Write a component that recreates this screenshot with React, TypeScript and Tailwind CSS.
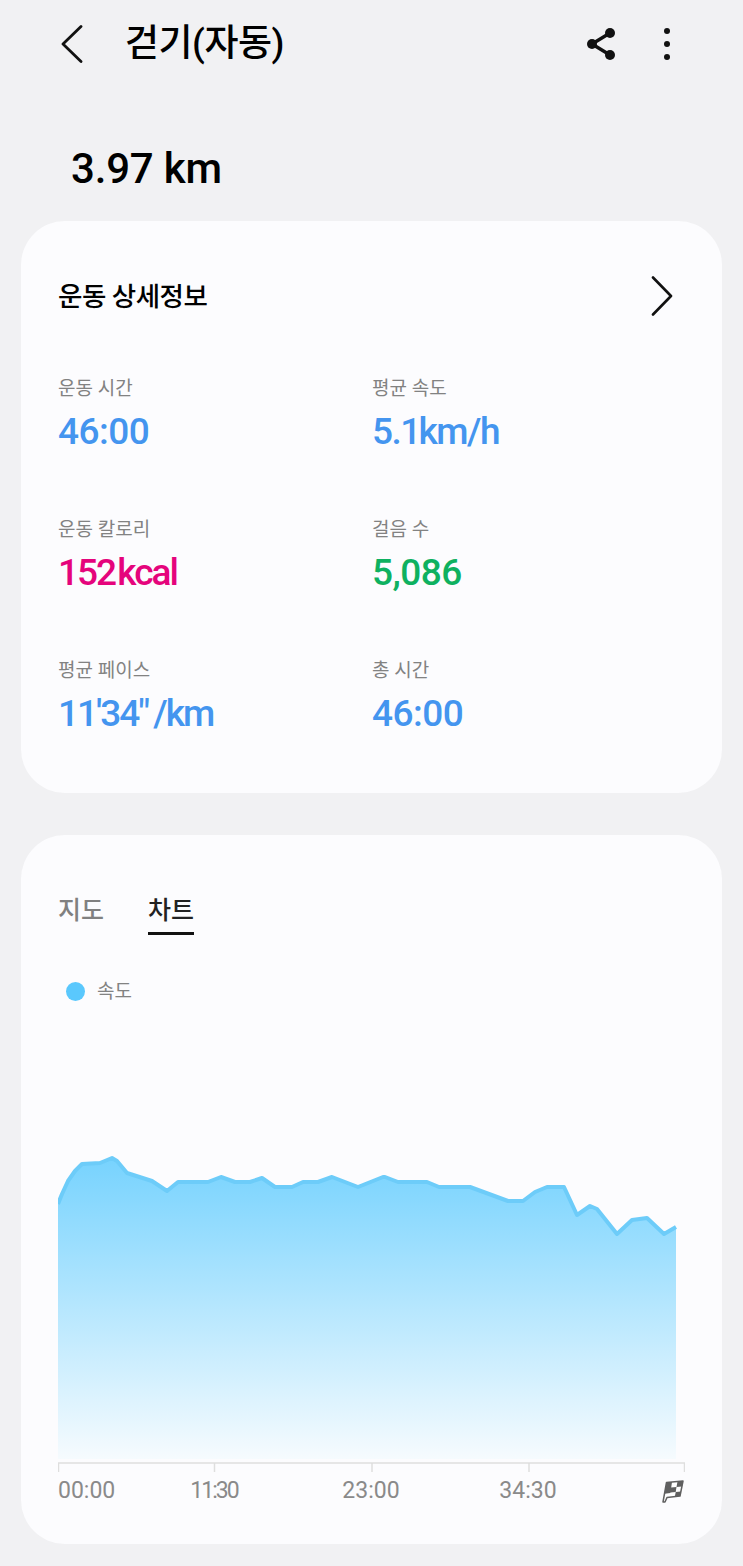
const linePoints = "58,1203 62,1193 68,1180 75,1170 82,1163 100,1162 112,1157 117,1160 127,1172 152,1180 167,1190 178,1181 208,1181 221,1176 235,1181 250,1181 262,1177 275,1186 292,1186 303,1181 318,1181 332,1176 358,1186 383,1176 385,1176 398,1181 427,1181 439,1186 470,1186 508,1200 523,1200 535,1191 547,1186 564,1186 577,1214 590,1205 597,1208 617,1233 632,1219 647,1217 664,1233 676,1226";

const plain = "tracking-[-0.5px]";

const stats = [
  { label: "운동 시간", value: "46:00", color: "text-[#4495ef]", fit: plain },
  { label: "평균 속도", value: "5.1 km/h", color: "text-[#4495ef]", fit: "tracking-[-1.500px] [word-spacing:-9px]" },
  { label: "운동 칼로리", value: "152 kcal", color: "text-[#e5047c]", fit: "tracking-[-2px] [word-spacing:-5px]" },
  { label: "걸음 수", value: "5,086", color: "text-[#0eb160]", fit: plain },
  { label: "평균 페이스", value: "11'34\" /km", color: "text-[#4495ef]", fit: "tracking-[-2px] [word-spacing:-2px]" },
  { label: "총 시간", value: "46:00", color: "text-[#4495ef]", fit: plain },
];

const sans = "font-['Roboto','Noto_Sans_CJK_KR',sans-serif]";

function Chart() {
  return (
    <svg viewBox="58 1140 627 332" className="block h-[332px] w-[627px]">
      <defs>
        <linearGradient id="speed" x1="0" y1="1160" x2="0" y2="1458" gradientUnits="userSpaceOnUse">
          <stop offset="0" stopColor="#78d3fe" />
          <stop offset="1" stopColor="#f6fbfe" />
        </linearGradient>
      </defs>
      <polygon points={`${linePoints} 676,1458 58,1458`} fill="url(#speed)" />
      <polyline points={linePoints} fill="none" stroke="#6dccf9" strokeWidth="4" strokeLinejoin="round" />
      <path d="M58 1462H685M58.5 1462V1471M214.5 1462V1471M372 1462V1471M529 1462V1471M684.5 1462V1471" fill="none" stroke="#dedede" strokeWidth="1.5" />
    </svg>
  );
}

function FlagIcon() {
  return (
    <svg viewBox="0 0 24 24" className="h-6 w-6 -translate-x-[1px]">
      <path d="M3 23 6.5 3.500 23 2l-3 15-13 1.500L5 23Z" fill="#fff" stroke="#606060" strokeWidth="1.500" strokeLinejoin="round" />
      <path d="M6.500 3.500 12 3l-.8 5.500-5.600.5ZM17.500 2.500 23 2l-1 5.500-5.500.5ZM11.200 8.500l5.300-.5-.8 5-5.400.6ZM5.600 9l5.600-.5-.9 5.600-5.700.6ZM15.700 13l5.400-.6-1.100 4.600-5.100.6Z" fill="#606060" />
    </svg>
  );
}

export default function App() {
  return (
    <div className={`${sans} h-[1566px] w-[743px] overflow-hidden bg-[#f1f1f3] text-black`}>
      <header className="flex h-[88px] items-center pl-[60px] pr-[73px]">
        <svg viewBox="0 0 24 38" className="h-[38px] w-[24px]">
          <path d="M21 1.500 3 19l18 17.500" fill="none" stroke="#111" strokeWidth="2.800" strokeLinecap="round" strokeLinejoin="round" />
        </svg>
        <h1 className="ml-[41px] text-[37px] font-medium tracking-[-0.5px]">걷기(자동)</h1>
        <svg viewBox="0 0 32 34" className="ml-auto h-[34px] w-[32px]">
          <path d="M25 6 7 17l18 11" fill="none" stroke="#111" strokeWidth="3.500" />
          <circle cx="25" cy="6" r="5" fill="#111" />
          <circle cx="7" cy="17" r="5" fill="#111" />
          <circle cx="25" cy="28" r="5" fill="#111" />
        </svg>
        <div className="ml-[47px] flex flex-col gap-[7px]">
          <span className="h-[6px] w-[6px] rounded-full bg-[#111]" />
          <span className="h-[6px] w-[6px] rounded-full bg-[#111]" />
          <span className="h-[6px] w-[6px] rounded-full bg-[#111]" />
        </div>
      </header>

      <div className="mt-[50px] flex h-[60px] items-center pl-[71px] text-[42px] font-medium tracking-[-0.2px]">3.97 km</div>

      <section className="mx-[21px] mt-[23px] h-[572px] rounded-[44px] bg-[#fcfcfe] pl-[37px] pr-[49px] pt-[55px]">
        <div className="flex h-[40px] items-center justify-between">
          <h2 className="translate-y-[1px] text-[26.500px] font-medium tracking-[-0.5px]">운동 상세정보</h2>
          <svg viewBox="0 0 22 40" className="h-[40px] w-[22px]">
            <path d="M2 1.500 20 20 2 38.500" fill="none" stroke="#111" strokeWidth="2.600" strokeLinecap="round" strokeLinejoin="round" />
          </svg>
        </div>
        <div className="mt-[54px] grid grid-cols-[314px_1fr] gap-y-[51px]">
          {stats.map((s) => (
            <div key={s.label} className="h-[90px]">
              <div className="h-[37px] text-[19px] leading-[38px] text-[#828282]">{s.label}</div>
              <div className={`h-[50px] whitespace-nowrap text-[37px] font-medium leading-[50px] ${s.fit} ${s.color}`}>{s.value}</div>
            </div>
          ))}
        </div>
      </section>

      <section className="mx-[21px] mt-[42px] h-[709px] rounded-[44px] bg-[#fcfcfe] pl-[37px] pr-[37px] pt-[54px]">
        <div className="flex gap-[44px] text-[25px] font-medium">
          <div className="h-[46px] leading-[44px] text-[#808080]">지도</div>
          <div className="h-[46px] border-b-[3px] border-[#111] leading-[44px] text-[#222]">차트</div>
        </div>
        <div className="mt-[44px] flex items-center pl-[8px] text-[19px] text-[#828282]">
          <span className="h-[19px] w-[19px] rounded-full bg-[#5ac8fd]" />
          <span className="ml-[12px] translate-y-[1px] leading-[24px]">속도</span>
        </div>
        <div className="mt-[138px]">
          <Chart />
        </div>
        <div className="mt-[3px] grid grid-cols-[49px_100px_100px_100px_50px] gap-x-[57px] text-[23px] leading-[30px] text-[#8a8a8a]">
          <span className="whitespace-nowrap">00:00</span>
          <span className="text-center tracking-[-2px]">11:30</span>
          <span className="text-center">23:00</span>
          <span className="text-center">34:30</span>
          <span className="flex items-center justify-end">
            <FlagIcon />
          </span>
        </div>
      </section>
    </div>
  );
}
